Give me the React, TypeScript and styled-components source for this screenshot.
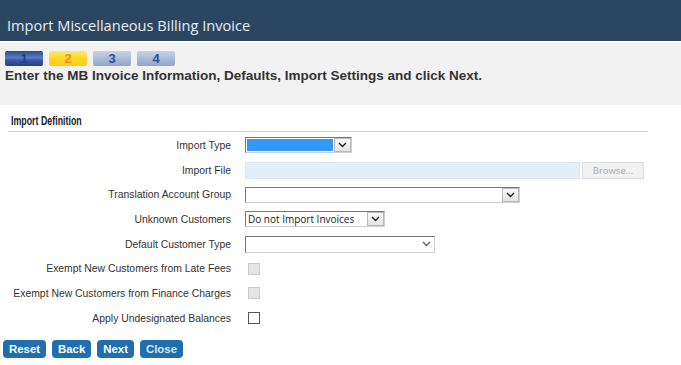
import React from 'react'
import styled, { createGlobalStyle } from 'styled-components'

const GlobalStyle = createGlobalStyle`
    body {
        margin: 0;
        background: #fff;
        font-family: 'Liberation Sans', Arial, sans-serif;
        color: #333;
    }
`

type StepState = 'done' | 'current' | 'todo'

const steps: { n: number; state: StepState }[] = [
    { n: 1, state: 'done' },
    { n: 2, state: 'current' },
    { n: 3, state: 'todo' },
    { n: 4, state: 'todo' },
]

const Chevron: React.FC<{ color?: string }> = ({ color = '#222' }) => (
    <svg width="9" height="6" viewBox="0 0 9 6">
        <path d="M1 1 L4.5 4.5 L8 1" fill="none" stroke={color} strokeWidth="1.4" />
    </svg>
)

const App: React.FC = () => {
    return (
        <>
            <GlobalStyle />
            <Header>
                <Title>Import Miscellaneous Billing Invoice</Title>
            </Header>
            <InfoPanel>
                <Steps>
                    {steps.map(s => (
                        <Step key={s.n} state={s.state}>
                            {s.n}
                        </Step>
                    ))}
                </Steps>
                <Instruction>Enter the MB Invoice Information, Defaults, Import Settings and click Next.</Instruction>
            </InfoPanel>
            <Section>
                <SectionTitle>Import Definition</SectionTitle>
            </Section>
            <Form>
                <Label>Import Type</Label>
                <Field>
                    <SelectBox width={107}>
                        <Selected />
                        <ArrowButton>
                            <Chevron />
                        </ArrowButton>
                    </SelectBox>
                </Field>

                <Label>Import File</Label>
                <Field>
                    <FileInput />
                    <BrowseButton>Browse...</BrowseButton>
                </Field>

                <Label>Translation Account Group</Label>
                <Field>
                    <SelectBox width={275}>
                        <SelectText />
                        <ArrowButton>
                            <Chevron />
                        </ArrowButton>
                    </SelectBox>
                </Field>

                <Label>Unknown Customers</Label>
                <Field>
                    <SelectBox width={140}>
                        <SelectText>Do not Import Invoices</SelectText>
                        <ArrowButton>
                            <Chevron />
                        </ArrowButton>
                    </SelectBox>
                </Field>

                <Label>Default Customer Type</Label>
                <Field>
                    <SelectBox width={190} tall>
                        <SelectText />
                        <PlainArrow>
                            <Chevron color="#666" />
                        </PlainArrow>
                    </SelectBox>
                </Field>

                <Label>Exempt New Customers from Late Fees</Label>
                <Field>
                    <Checkbox disabled />
                </Field>

                <Label>Exempt New Customers from Finance Charges</Label>
                <Field>
                    <Checkbox disabled />
                </Field>

                <Label>Apply Undesignated Balances</Label>
                <Field>
                    <Checkbox />
                </Field>
            </Form>
            <ButtonBar>
                <ActionButton>Reset</ActionButton>
                <ActionButton>Back</ActionButton>
                <ActionButton>Next</ActionButton>
                <ActionButton faded>Close</ActionButton>
            </ButtonBar>
        </>
    )
}

export default App

const Header = styled.div`
    height: 43px;
    background: #2c4660;
    display: flex;
    align-items: flex-end;
    padding: 0 7px 6px;
    box-sizing: border-box;
    border-bottom: 2px solid #fff;
`

const Title = styled.div`
    font-family: 'Open Sans', 'Noto Sans', sans-serif;
    font-size: 14.6px;
    color: #e6edf3;
`

const InfoPanel = styled.div`
    background: #f2f2f2;
    height: 62px;
    padding: 8px 5px 0;
    box-sizing: border-box;
`

const Steps = styled.div`
    display: flex;
    gap: 6px;
`

const stepBg: Record<StepState, string> = {
    done: 'linear-gradient(#2d4a8e 0%, #5a7cc4 45%, #3a5aa6 60%, #24407e 100%)',
    current: 'linear-gradient(#ffe86a 0%, #ffd52a 50%, #ffcb10 100%)',
    todo: 'linear-gradient(#c8d4e6 0%, #a9bcd8 50%, #8fa5c8 100%)',
}

const stepColor: Record<StepState, string> = {
    done: '#22407f',
    current: '#e8921a',
    todo: '#2c4f9e',
}

const Step = styled.div<{ state: StepState }>`
    width: 38px;
    height: 15px;
    border-radius: 2px;
    background: ${p => stepBg[p.state]};
    color: ${p => stepColor[p.state]};
    font-weight: bold;
    font-size: 13px;
    line-height: 16px;
    text-align: center;
`

const Instruction = styled.div`
    margin-top: 2px;
    font-size: 13.5px;
    font-weight: bold;
    color: #333;
`

const Section = styled.div`
    display: flex;
    margin: 9px 33px 0 8px;
    border-bottom: 1px solid #cfcfcf;
    padding: 0 3px 3px;
`

const SectionTitle = styled.div`
    font-size: 13px;
    line-height: 14px;
    font-weight: bold;
    color: #222;
    transform: scaleX(0.68);
    transform-origin: left center;
`

const Form = styled.div`
    display: grid;
    grid-template-columns: 231px 1fr;
    grid-auto-rows: 24.7px;
    column-gap: 14px;
    padding-top: 1px;
`

const Label = styled.div`
    display: flex;
    align-items: center;
    justify-content: flex-end;
    font-size: 10.4px;
    color: #333;
    white-space: nowrap;
`

const Field = styled.div`
    display: flex;
    align-items: center;
    gap: 2px;
`

const SelectBox = styled.div<{ width: number; tall?: boolean }>`
    width: ${p => p.width}px;
    height: ${p => (p.tall ? 17 : 16)}px;
    box-sizing: border-box;
    border: 1px solid;
    border-color: #7a7a7a #cfcfcf #cfcfcf #7a7a7a;
    background: #fff;
    display: flex;
    align-items: stretch;
`

const Selected = styled.div`
    flex: 1;
    background: #3399ff;
    margin: 1px;
`

const SelectText = styled.div`
    flex: 1;
    font-family: 'Open Sans', 'Noto Sans', sans-serif;
    font-size: 10px;
    line-height: 14px;
    padding-left: 2px;
    color: #222;
    white-space: nowrap;
`

const ArrowButton = styled.div`
    width: 15px;
    margin: 0 0 0 auto;
    border: 1px solid #b8b8b8;
    background: linear-gradient(#fafafa, #e4e4e4);
    display: flex;
    align-items: center;
    justify-content: center;
`

const PlainArrow = styled.div`
    width: 16px;
    display: flex;
    align-items: center;
    justify-content: center;
`

const FileInput = styled.div`
    width: 335px;
    height: 17px;
    box-sizing: border-box;
    background: #e4eef8;
    border: 1px solid #dde6ee;
`

const BrowseButton = styled.div`
    width: 62px;
    height: 17px;
    box-sizing: border-box;
    background: #f2f2f2;
    border: 1px solid #dcdcdc;
    font-family: 'Open Sans', 'Noto Sans', sans-serif;
    font-size: 9.5px;
    color: #a8a8a8;
    text-align: center;
    line-height: 15px;
`

const Checkbox = styled.div<{ disabled?: boolean }>`
    width: 12px;
    height: 12px;
    box-sizing: border-box;
    margin-left: 3px;
    border: 1px solid ${p => (p.disabled ? '#cacaca' : '#555')};
    background: ${p => (p.disabled ? '#e4e4e4' : '#fff')};
`

const ButtonBar = styled.div`
    display: flex;
    gap: 6px;
    padding: 9px 0 0 3px;
`

const ActionButton = styled.div<{ faded?: boolean }>`
    height: 18px;
    padding: 0 6px;
    border-radius: 4px;
    background: #1f6fae;
    color: ${p => (p.faded ? '#d9e6f2' : '#fff')};
    font-size: 11.4px;
    font-weight: bold;
    line-height: 18px;
`
